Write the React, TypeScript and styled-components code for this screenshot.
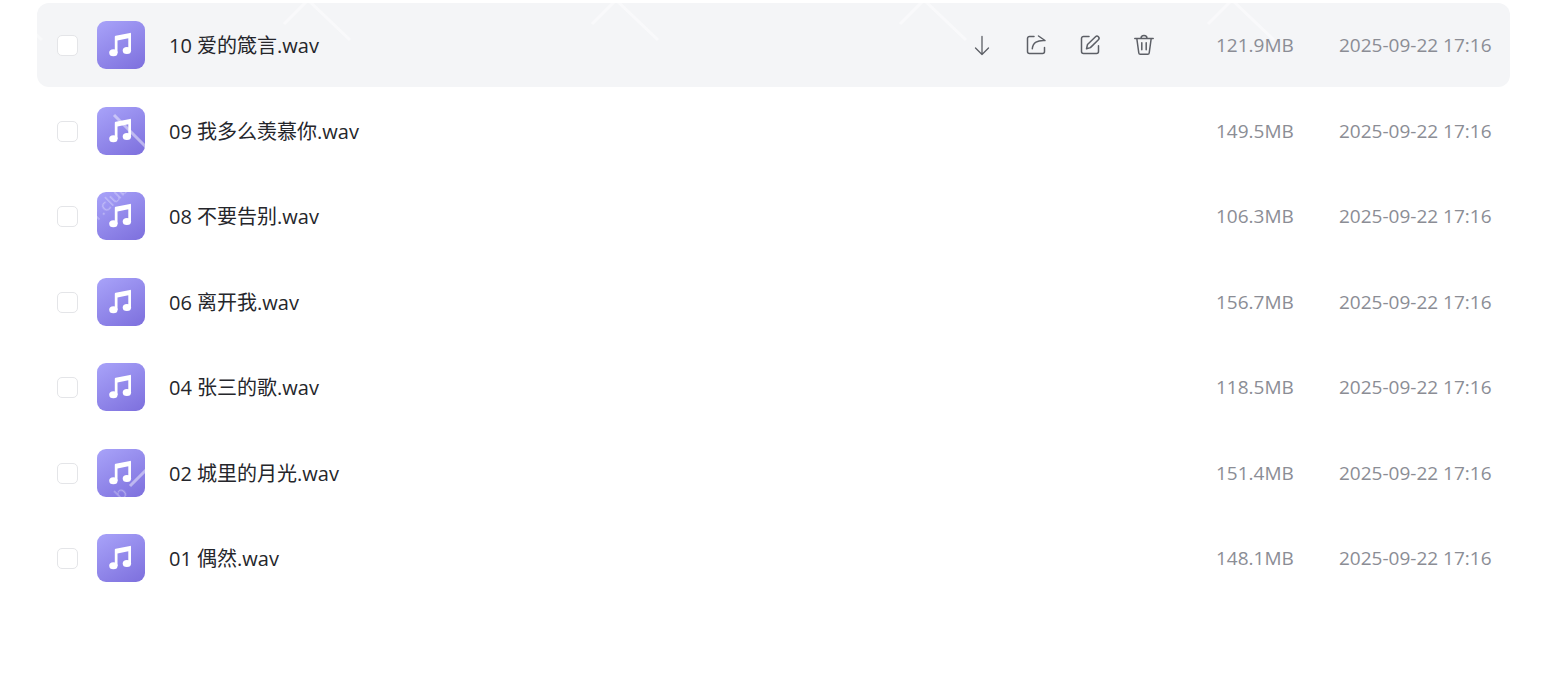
import React from "react";
import styled, { createGlobalStyle } from "styled-components";

const GlobalStyle = createGlobalStyle`
  * { box-sizing: border-box; }
  body {
    margin: 0;
    background: #ffffff;
    font-family: "Open Sans", "Noto Sans CJK SC", sans-serif;
    color: #25262b;
  }
`;

const Page = styled.main`
  position: relative;
  padding: 3px 33px 0 37px;
`;

const FileList = styled.ul`
  margin: 0;
  padding: 0;
  list-style: none;
`;

const Row = styled.li<{ $active: boolean }>`
  display: flex;
  align-items: center;
  height: 84px;
  padding: 0 17px 0 20px;
  margin-bottom: 1px;
  border-radius: 12px;
  background: ${(p) => (p.$active ? "#f4f5f7" : "transparent")};

  &:nth-child(odd) {
    margin-bottom: 2px;
  }
`;

const Check = styled.input`
  appearance: none;
  flex: none;
  width: 21px;
  height: 21px;
  margin: 0;
  border: 1px solid #e4e5e8;
  border-radius: 5px;
  background: #ffffff;
`;

const FileLabel = styled.label`
  display: flex;
  flex: 1;
  align-items: center;
  gap: 24px;
  min-width: 0;
  margin-left: 19px;
`;

const FileIcon = styled.svg`
  flex: none;
  display: block;
  width: 48px;
  height: 48px;
`;

const FileName = styled.span`
  padding-top: 2px;
  font-size: 20px;
  line-height: 28px;
  white-space: nowrap;
`;

const Actions = styled.div`
  display: flex;
  gap: 30px;
  margin-right: 60px;
`;

const ActionButton = styled.button`
  display: block;
  width: 24px;
  height: 24px;
  padding: 0;
  border: 0;
  background: none;
  color: #5c5f66;

  svg {
    display: block;
    fill: none;
    stroke: currentColor;
    stroke-width: 1.5;
    stroke-linecap: round;
    stroke-linejoin: round;
  }
`;

const Meta = styled.span<{ $width: number }>`
  flex: none;
  width: ${(p) => p.$width}px;
  font-size: 19px;
  line-height: 28px;
  white-space: nowrap;
  color: #8b8d95;
`;

const Watermark = styled.svg`
  position: absolute;
  inset: 0;
  width: 100%;
  height: 100%;
  pointer-events: none;
`;

const files = [
  { name: "10 爱的箴言.wav", size: "121.9MB" },
  { name: "09 我多么羡慕你.wav", size: "149.5MB" },
  { name: "08 不要告别.wav", size: "106.3MB" },
  { name: "06 离开我.wav", size: "156.7MB" },
  { name: "04 张三的歌.wav", size: "118.5MB" },
  { name: "02 城里的月光.wav", size: "151.4MB" },
  { name: "01 偶然.wav", size: "148.1MB" },
];

const actions = [
  {
    label: "下载",
    drawing: <path d="M12 3.500v18M5.500 15l6.500 6.500 6.500-6.500" strokeWidth="1.3" />,
  },
  {
    label: "分享",
    drawing: (
      <path d="M10 3.500H5.500a2 2 0 0 0-2 2v13a2 2 0 0 0 2 2h13a2 2 0 0 0 2-2V14.500M14.500 3l6.500 4.500C13.500 7 8.700 9.500 8.300 15.800" />
    ),
  },
  {
    label: "重命名",
    drawing: (
      <>
        <path d="M11 3.500H5.500a2 2 0 0 0-2 2v13a2 2 0 0 0 2 2h13a2 2 0 0 0 2-2V12.800" />
        <path d="M8.500 15.800l1-4.300 8-7.700a2 2 0 0 1 2.900 2.900l-8 7.900z" />
      </>
    ),
  },
  {
    label: "删除",
    drawing: (
      <path d="M2.800 5.500h18.400M4.800 5.500l2 14.500a1.500 1.500 0 0 0 1.500 1.300h7.400a1.500 1.500 0 0 0 1.500-1.300l2-14.500M9 5.500a3 3 0 0 1 6 0M9.800 9.800v7M14.200 9.800v7" />
    ),
  },
];

const peaks = [0, 308, 616, 924, 1232];

const MusicIcon = () => (
  <FileIcon viewBox="0 0 48 48" aria-hidden="true">
    <defs>
      <linearGradient id="tile" x1="0.2" y1="0" x2="0.8" y2="1">
        <stop offset="0" stopColor="#a59ff7" />
        <stop offset="1" stopColor="#8073df" />
      </linearGradient>
    </defs>
    <rect width="48" height="48" rx="9" fill="url(#tile)" />
    <path
      d="M17.800 32V15.800Q17.800 15 18.700 14.800L33 11.900Q34 11.700 34 12.700V29.500H31.300V17.300L20.500 19.600V32Z"
      fill="#ffffff"
    />
    <ellipse cx="16.400" cy="31.800" rx="4.200" ry="3.500" fill="#ffffff" />
    <ellipse cx="29.900" cy="29.500" rx="4.200" ry="3.500" fill="#ffffff" />
  </FileIcon>
);

export default function App() {
  return (
    <>
      <GlobalStyle />
      <Page>
        <FileList>
          {files.map((file, i) => (
            <Row key={file.name} $active={i === 0}>
              <Check type="checkbox" id={`file-${i}`} />
              <FileLabel htmlFor={`file-${i}`}>
                <MusicIcon />
                <FileName>{file.name}</FileName>
              </FileLabel>
              {i === 0 && (
                <Actions>
                  {actions.map((action) => (
                    <ActionButton key={action.label} type="button" aria-label={action.label}>
                      <svg viewBox="0 0 24 24" width="24" height="24" aria-hidden="true">
                        {action.drawing}
                      </svg>
                    </ActionButton>
                  ))}
                </Actions>
              )}
              <Meta $width={123}>{file.size}</Meta>
              <Meta $width={154}>2025-09-22 17:16</Meta>
            </Row>
          ))}
        </FileList>
        <Watermark aria-hidden="true">
          <g stroke="#ffffff" strokeWidth="3" fill="none" opacity="0.45">
            {peaks.map((x) => (
              <path key={x} d={`M${x - 24} 24L${x} 0L${x + 42} 40`} />
            ))}
            <path d="M114 115l34 34M130 486l18-18" />
          </g>
          <g fill="#ffffff" fontSize="17" opacity="0.35">
            <text transform="translate(98 221) rotate(-45)">r.club</text>
            <text transform="translate(121 501) rotate(-45)">b</text>
          </g>
        </Watermark>
      </Page>
    </>
  );
}
